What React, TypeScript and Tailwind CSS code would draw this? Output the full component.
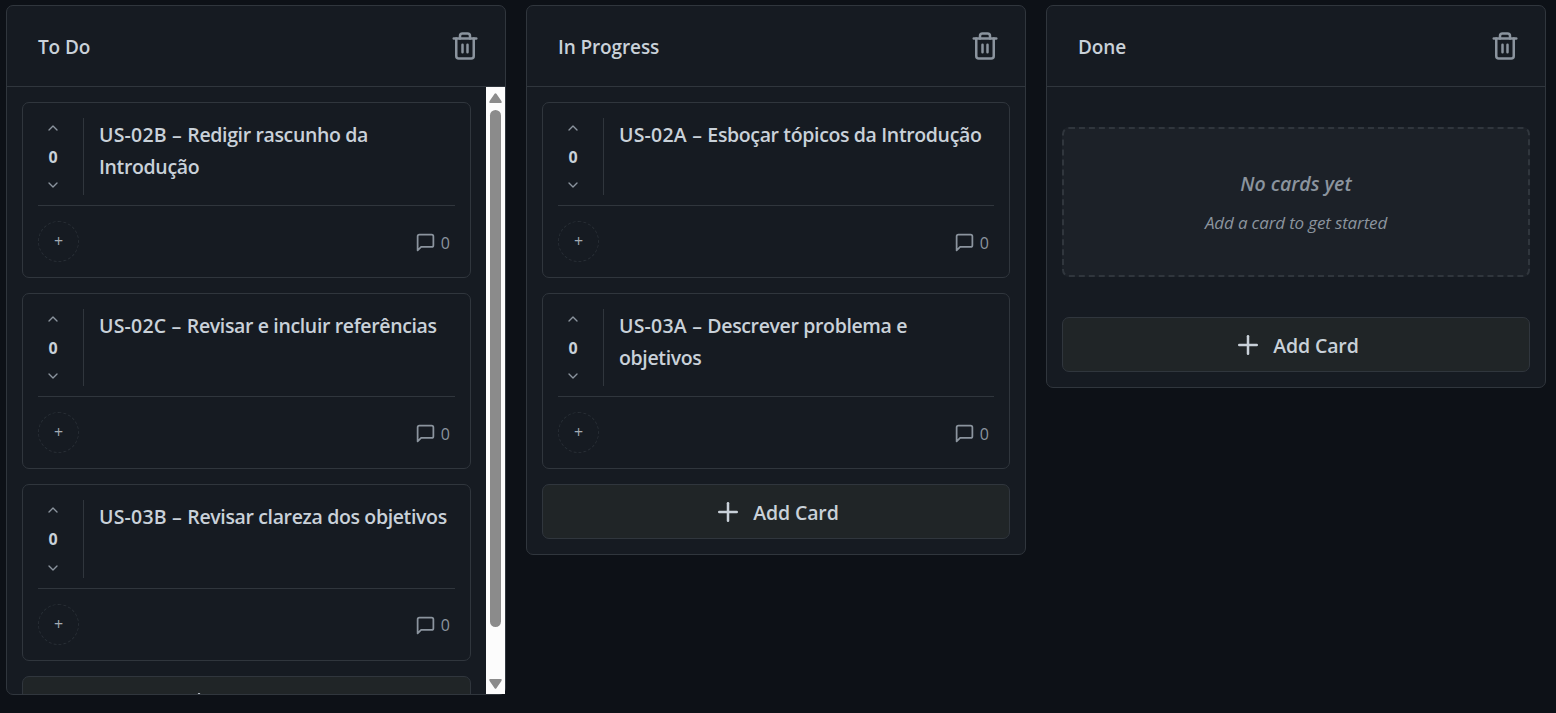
import React from "react";
import { ChevronUp, ChevronDown, Plus } from "lucide-react";

function TrashIcon() {
  return (
    <svg width="30" height="30" viewBox="0 0 24 24" fill="none" stroke="currentColor" strokeWidth="2" strokeLinecap="round" strokeLinejoin="round">
      <path d="M3 6h18" />
      <path d="M19 6v14a2 2 0 0 1-2 2H7a2 2 0 0 1-2-2V6" />
      <path d="M8 6V4a2 2 0 0 1 2-2h4a2 2 0 0 1 2 2v2" />
      <path d="M10 11v6M14 11v6" />
    </svg>
  );
}

function CommentIcon() {
  return (
    <svg width="21" height="21" viewBox="0 0 24 24" fill="none" stroke="currentColor" strokeWidth="2" strokeLinecap="round" strokeLinejoin="round">
      <path d="M21 15a2 2 0 0 1-2 2H7l-4 4V5a2 2 0 0 1 2-2h14a2 2 0 0 1 2 2z" />
    </svg>
  );
}

type CardData = { code: string; title: string };

function Card({ code, title }: CardData) {
  return (
    <article className="h-[176.2px] shrink-0 rounded-[7px] border border-[#30363d] bg-[#161b22] p-[15px]">
      <div className="flex h-[77.2px]">
        <div className="flex w-[46px] shrink-0 flex-col items-center justify-between border-r border-[#30363d] pr-[15px] text-[#8b949e]">
          <button className="flex h-5 items-center"><ChevronUp size={16} /></button>
          <span className="text-[16px] leading-5 font-bold text-[#c9d1d9]">0</span>
          <button className="flex h-5 items-center"><ChevronDown size={16} /></button>
        </div>
        <h3 className="pt-px pr-1 pl-[15px] text-[19.5px] leading-8 font-semibold tracking-[-0.36px] text-[#c9d1d9]">
          <span className="tracking-[0.2px]">{`${code} – `}</span>{title}
        </h3>
      </div>
      <div className="mt-2.5 flex items-center justify-between border-t border-[#30363d] pt-[15px] pr-[5px] text-[#8b949e]">
        <button className="flex size-[41px] items-center justify-center rounded-full border border-dashed border-[#282e35] pb-px text-[16px] leading-none text-[#a3abb3]">+</button>
        <div className="flex items-center gap-[4.5px] pt-0.5">
          <CommentIcon />
          <span className="text-[16px] leading-5">0</span>
        </div>
      </div>
    </article>
  );
}

function AddCard() {
  return (
    <button className="flex h-[55px] w-full shrink-0 items-center justify-center gap-2.5 rounded-[7px] border border-[#30363d] bg-[#202527] text-[19.5px] font-semibold tracking-[-0.15px] text-[#c9d1d9]">
      <Plus size={30} />
      <span className="pt-0.5">Add Card</span>
    </button>
  );
}

function Scrollbar() {
  return (
    <div className="flex w-[19px] shrink-0 flex-col items-center bg-[#fcfcfc] pt-1.5 pb-[5px]">
      <svg width="13" height="10" viewBox="0 0 13 10" fill="#8b8b8b"><path d="M5.6 .8Q6.5-.5 7.4.8L12.4 8Q13.2 10 12 10H1Q-.2 10 .6 8Z" /></svg>
      <div className="mt-[7px] h-[517px] w-[11px] rounded-full bg-[#8b8b8b]" />
      <svg className="mt-auto" width="13" height="10" viewBox="0 0 13 10" fill="#8b8b8b"><path d="M5.6 9.2Q6.5 10.5 7.4 9.2L12.4 2Q13.2 0 12 0H1Q-.2 0 .6 2Z" /></svg>
    </div>
  );
}

type ColumnProps = { title: string; cards: CardData[]; scroll?: boolean };

function Column({ title, cards, scroll }: ColumnProps) {
  return (
    <section className={`flex w-[500px] shrink-0 flex-col rounded-[7px] border border-[#30363d] bg-[#161b22] ${scroll ? "h-[690px]" : ""}`}>
      <header className="flex h-[81px] shrink-0 items-center justify-between border-b border-[#30363d] pr-[25px] pl-[31px]">
        <h2 className="pt-0.5 text-[19px] font-semibold tracking-[-0.12px] text-[#c9d1d9]">{title}</h2>
        <button className="text-[#8b949e]"><TrashIcon /></button>
      </header>
      <div className="flex min-h-0 flex-1">
        <div className="flex min-w-0 flex-1 flex-col gap-[15px] overflow-hidden p-[15px]">
          {cards.map((c) => <Card key={c.code} {...c} />)}
          {cards.length === 0 && (
            <div className="my-[25px] flex h-[150px] flex-col items-center justify-center rounded-[7px] border-2 border-dashed border-[#30363d] bg-[#1c2128] text-[#8b949e] italic">
              <p className="pt-px text-[19.5px] leading-8 font-semibold">No cards yet</p>
              <p className="mt-[9px] text-[17px] leading-7 tracking-[-0.15px]">Add a card to get started</p>
            </div>
          )}
          <AddCard />
        </div>
        {scroll && <Scrollbar />}
      </div>
    </section>
  );
}

const todo: CardData[] = [
  { code: "US-02B", title: "Redigir rascunho da Introdução" },
  { code: "US-02C", title: "Revisar e incluir referências" },
  { code: "US-03B", title: "Revisar clareza dos objetivos" },
];

const inProgress: CardData[] = [
  { code: "US-02A", title: "Esboçar tópicos da Introdução" },
  { code: "US-03A", title: "Descrever problema e objetivos" },
];

export default function App() {
  return (
    <main className="flex h-[713px] items-start gap-5 overflow-hidden bg-[#0d1117] pt-[5px] pl-1.5 font-['Open_Sans','Noto_Sans',sans-serif]">
      <Column title="To Do" scroll cards={todo} />
      <Column title="In Progress" cards={inProgress} />
      <Column title="Done" cards={[]} />
    </main>
  );
}
